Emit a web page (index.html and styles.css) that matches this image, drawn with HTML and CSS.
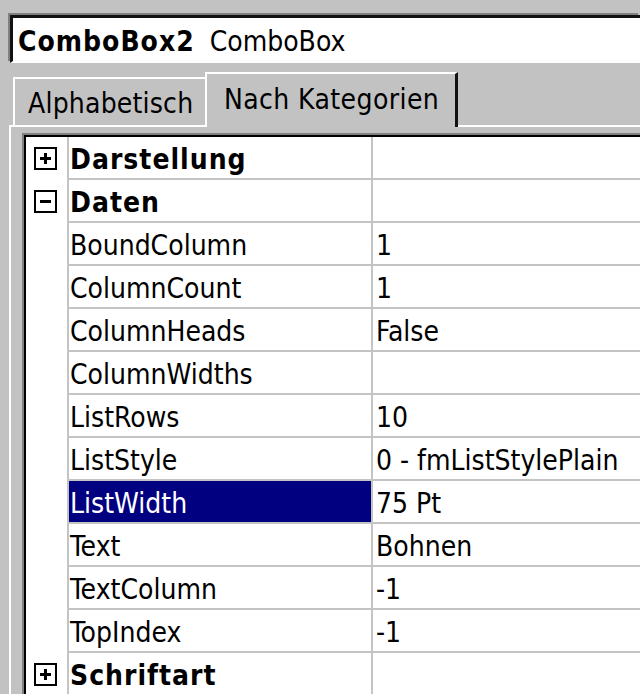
FILE: index.html
```html
<!DOCTYPE html>
<html lang="de">
<head>
    <meta charset="UTF-8">
    <title>Eigenschaften - ComboBox2</title>
    <link rel="stylesheet" href="styles.css">
</head>
<body>
    <div class="combo">
        <b>ComboBox2</b><span>ComboBox</span>
    </div>

    <div class="tabs">
        <div class="tab">Alphabetisch</div>
        <div class="tab active">Nach Kategorien</div>
    </div>

    <div class="panel">
        <div class="frame">
            <div class="grid">
                <div class="row cat"><div class="toggle plus"></div><div class="name">Darstellung</div><div class="value"></div></div>
                <div class="row cat"><div class="toggle minus"></div><div class="name">Daten</div><div class="value"></div></div>
                <div class="row"><div class="toggle"></div><div class="name">BoundColumn</div><div class="value">1</div></div>
                <div class="row"><div class="toggle"></div><div class="name">ColumnCount</div><div class="value">1</div></div>
                <div class="row"><div class="toggle"></div><div class="name">ColumnHeads</div><div class="value">False</div></div>
                <div class="row"><div class="toggle"></div><div class="name">ColumnWidths</div><div class="value"></div></div>
                <div class="row"><div class="toggle"></div><div class="name">ListRows</div><div class="value">10</div></div>
                <div class="row"><div class="toggle"></div><div class="name">ListStyle</div><div class="value">0 - fmListStylePlain</div></div>
                <div class="row selected"><div class="toggle"></div><div class="name">ListWidth</div><div class="value">75 Pt</div></div>
                <div class="row"><div class="toggle"></div><div class="name">Text</div><div class="value">Bohnen</div></div>
                <div class="row"><div class="toggle"></div><div class="name">TextColumn</div><div class="value">-1</div></div>
                <div class="row"><div class="toggle"></div><div class="name">TopIndex</div><div class="value">-1</div></div>
                <div class="row cat"><div class="toggle plus"></div><div class="name">Schriftart</div><div class="value"></div></div>
            </div>
        </div>
    </div>
</body>
</html>
```

FILE: styles.css
```css
body {
    margin: 0;
    width: 640px;
    height: 694px;
    overflow: hidden;
    background-color: #c2c2c2;
    font-family: 'DejaVu Sans Condensed', 'DejaVu Sans', sans-serif;
    font-stretch: condensed;
    font-size: 28px;
    color: #000;
}
.combo {
    margin: 15px 0 0 10px;
    padding: 3px 0 0 5px;
    box-sizing: border-box;
    height: 48px;
    display: flex;
    align-items: center;
    gap: 15px;
    background-color: #fff;
    border-top: 3px solid #111;
    border-left: 3px solid #111;
    border-bottom: 2px solid #fff;
    box-shadow: -2px -2px 0 #808080;
    white-space: nowrap;
}
.combo b {
    font-weight: bold;
    letter-spacing: 1px;
}
.tabs {
    display: flex;
    align-items: flex-end;
    height: 62px;
    margin-left: 13px;
}
.tab {
    box-sizing: border-box;
    height: 48px;
    width: 194px;
    padding: 2px 0 0 13px;
    display: flex;
    align-items: center;
    border-top: 2px solid #fff;
    border-left: 2px solid #fff;
    white-space: nowrap;
    letter-spacing: 0.2px;
}
.tab.active {
    position: relative;
    height: 55px;
    width: 253px;
    margin-left: -2px;
    margin-bottom: -2px;
    padding: 0 0 2px 17px;
    border-right: 3px solid #111;
    background-color: #c2c2c2;
    letter-spacing: 0.4px;
}
.panel {
    margin-left: 9px;
    border-top: 2px solid #fff;
    border-left: 2px solid #fff;
    padding: 6px 0 0 11px;
}
.frame {
    border-top: 2px solid #808080;
    border-left: 2px solid #808080;
}
.grid {
    border-top: 2px solid #000;
    border-left: 2px solid #000;
    background-color: #fff;
}
.row {
    display: grid;
    grid-template-columns: 43px 304px 1fr;
    height: 43px;
}
.toggle {
    display: flex;
    align-items: center;
    justify-content: center;
    padding-right: 3px;
    border-right: 2px solid #c4c4c4;
}
.plus::before, .minus::before {
    width: 19px;
    height: 19px;
    border: 2px solid #000;
    content: '';
    background:
        linear-gradient(#000, #000) center / 11px 3px no-repeat;
}
.plus::before {
    background:
        linear-gradient(#000, #000) center / 11px 3px no-repeat,
        linear-gradient(#000, #000) center / 3px 11px no-repeat;
}
.name, .value {
    display: flex;
    align-items: center;
    padding-top: 4px;
    border-bottom: 2px solid #c4c4c4;
    white-space: nowrap;
    overflow: hidden;
}
.name {
    padding-left: 1px;
    border-right: 2px solid #c4c4c4;
}
.value {
    padding-left: 3px;
}
.cat .name {
    font-weight: bold;
    letter-spacing: 1px;
}
.selected .name {
    background-color: #000080;
    color: #fff;
}
```
